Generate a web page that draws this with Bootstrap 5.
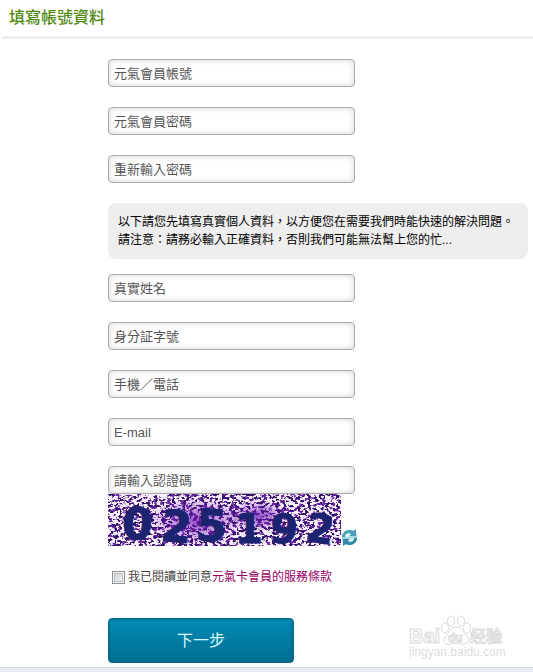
<!DOCTYPE html>
<html lang="zh-Hant">
<head>
<meta charset="utf-8">
<meta name="viewport" content="width=device-width, initial-scale=1">
<title>填寫帳號資料</title>
<link href="https://cdn.jsdelivr.net/npm/bootstrap@5.3.0/dist/css/bootstrap.min.css" rel="stylesheet">
<style>
body { font-family: "Liberation Sans", "Noto Sans CJK TC", sans-serif; font-size: 12px; line-height: 18px; color: #444; background: #fff; }
.page-title { font-size: 16px; line-height: 24px; color: #4f8a10; padding: 6px 7px; border-bottom: 3px solid #eee; font-weight: 500; margin: 0 0 0 2px; }
.signup { padding: 20px 5px 4px 108px; }
.field-list { display: grid; gap: 20px; }
.field { width: 247px; height: 28px; padding: 0 5px; font-size: 13px; line-height: 20px; border: 1px solid #aaa; border-radius: 4px; box-shadow: inset 0 0 6px #d4d4d4; color: #555; }
.field::placeholder { color: #555; opacity: 1; }
.notice { background: #eee; border-radius: 8px; color: #000; padding: 10px; margin: 20px 0 15px; }
.captcha { width: 233px; height: 52px; }
.reload { width: 17px; height: 17px; }
.agree { margin-top: 22px; padding-left: 4px; gap: 3px; }
.tick { appearance: none; width: 13px; height: 13px; margin: 0; border: 1px solid #8e8f8f; background: linear-gradient(135deg, #cbcfd5, #f6f6f6); box-shadow: inset 0 0 0 1px #f4f4f4, inset 0 0 0 2px #b8bec5; }
.tick:checked { background: #067096; }
.terms { color: #990066; }
.next { width: 186px; height: 45px; margin-top: 32px; font-size: 16px; color: #d9fbff; border: 1px solid #056a8c; border-radius: 4px; background: linear-gradient(#058bb6, #016e91); box-shadow: inset 0 0 3px #045a76; }
.next:hover { color: #fff; background: #016e91; }
.strip { background: #e9edf3; border-top: 1px solid #d3d8de; min-height: 5px; }
.watermark { position: absolute; right: 26px; bottom: 2px; width: 100px; height: 50px; pointer-events: none; }
</style>
</head>
<body class="d-flex flex-column min-vh-100">
<h1 class="page-title">填寫帳號資料</h1>
<main class="position-relative">
  <form class="signup">
    <div class="field-list">
      <input class="form-control field" type="text" placeholder="元氣會員帳號" aria-label="元氣會員帳號">
      <input class="form-control field" type="password" placeholder="元氣會員密碼" aria-label="元氣會員密碼">
      <input class="form-control field" type="password" placeholder="重新輸入密碼" aria-label="重新輸入密碼">
    </div>
    <div class="notice">以下請您先填寫真實個人資料，以方便您在需要我們時能快速的解決問題。<br>請注意：請務必輸入正確資料，否則我們可能無法幫上您的忙...</div>
    <div class="field-list">
      <input class="form-control field" type="text" placeholder="真實姓名" aria-label="真實姓名">
      <input class="form-control field" type="text" placeholder="身分証字號" aria-label="身分証字號">
      <input class="form-control field" type="tel" placeholder="手機／電話" aria-label="手機／電話">
      <input class="form-control field" type="email" placeholder="E-mail" aria-label="E-mail">
      <input class="form-control field" type="text" placeholder="請輸入認證碼" aria-label="請輸入認證碼">
    </div>
    <div class="d-flex align-items-end">
      <svg class="captcha overflow-visible" viewBox="0 0 233 52" role="img" aria-label="認證碼">
        <defs>
          <filter id="specks" x="0" y="0" width="100%" height="100%" color-interpolation-filters="sRGB">
            <feTurbulence type="fractalNoise" baseFrequency="0.28 0.36" numOctaves="2" seed="8"/>
            <feColorMatrix values="0 0 0 0 0.2  0 0 0 0 0.08  0 0 0 0 0.42  14 0 0 0 -7.4"/>
          </filter>
          <filter id="violet" x="0" y="0" width="100%" height="100%" color-interpolation-filters="sRGB">
            <feTurbulence type="fractalNoise" baseFrequency="0.22 0.32" numOctaves="2" seed="21"/>
            <feColorMatrix values="0 0 0 0 0.43  0 0 0 0 0.15  0 0 0 0 0.66  0 12 0 0 -6.6"/>
          </filter>
          <radialGradient id="haze"><stop offset="0" stop-color="#6a0fae" stop-opacity=".7"/><stop offset="1" stop-color="#6a0fae" stop-opacity="0"/></radialGradient>
        </defs>
        <rect width="233" height="52" fill="#faf0fb"/>
        <rect width="233" height="52" filter="url(#violet)"/>
        <rect width="233" height="52" filter="url(#specks)"/>
        <ellipse cx="88" cy="27" rx="48" ry="24" fill="url(#haze)"/>
        <ellipse cx="150" cy="22" rx="34" ry="16" fill="url(#haze)"/>
        <g font-family="DejaVu Sans" font-weight="700" font-size="44" fill="#1c2370" stroke="#1c2370" stroke-linejoin="round">
          <text x="14" y="45" transform="rotate(3 29 30)">0</text>
          <text x="53" y="48" transform="rotate(5 68 32)">2</text>
          <text x="88" y="47" transform="rotate(4 103 32)">5</text>
          <text x="127" y="49" font-size="40">1</text>
          <text x="162" y="49" font-size="40" transform="rotate(5 176 36)">9</text>
          <text x="198" y="49" font-size="40" transform="rotate(8 213 38)">2</text>
        </g>
      </svg>
      <button class="btn p-0 border-0 d-flex" type="button" aria-label="更換認證碼">
        <svg class="reload" viewBox="0 0 17 17" aria-hidden="true">
          <circle cx="8.500" cy="8.500" r="7.800" fill="#9ed3e1"/>
          <path d="M1 8C1 3 7-1 12 2L15 0V7H8L10 5C7 3 4 5 4 8Z" fill="#4a9fba"/>
          <path d="M16 9C16 14 10 18 5 15L2 17V10H9L7 12C10 14 13 12 13 9Z" fill="#3189aa"/>
          <path d="M4 8C4 5 7 3 10 5L8 7H13M13 9C13 12 10 14 7 12L9 10H4" fill="#e3f5f8"/>
        </svg>
      </button>
    </div>
    <div class="agree d-flex align-items-center">
      <input class="tick" type="checkbox" id="agree">
      <span><label for="agree">我已閱讀並同意</label><a class="terms text-decoration-none" href="#terms">元氣卡會員的服務條款</a></span>
    </div>
    <button class="btn next d-block p-0" type="submit">下一步</button>
  </form>
  <svg class="watermark" viewBox="0 0 100 50" role="img" aria-label="Baidu 经验">
    <g fill="#fff" stroke="#dadada" stroke-width="1">
      <text x="2" y="28" font-family="Liberation Sans" font-weight="700" font-size="20">Bai</text>
      <ellipse cx="38" cy="13" rx="3.500" ry="5"/>
      <ellipse cx="44" cy="6" rx="3.500" ry="5"/>
      <ellipse cx="54" cy="6" rx="3.500" ry="5"/>
      <ellipse cx="60" cy="13" rx="3.500" ry="5"/>
      <path d="M49 12C55 12 56 18 60 21C64 26 61 30 55 29C51 28 48 28 44 29C37 31 35 26 38 22C42 18 43 12 49 12Z"/>
      <text x="41" y="27" font-family="Liberation Sans" font-weight="700" font-size="12">du</text>
      <text x="63" y="27" font-family="Noto Sans CJK SC" font-weight="500" font-size="16">经验</text>
    </g>
    <text x="2" y="41" font-family="Liberation Sans" font-size="12" fill="#dedede">jingyan.baidu.com</text>
  </svg>
</main>
<footer class="strip flex-fill"></footer>
<script src="https://cdn.jsdelivr.net/npm/bootstrap@5.3.0/dist/js/bootstrap.bundle.min.js"></script>
</body>
</html>
